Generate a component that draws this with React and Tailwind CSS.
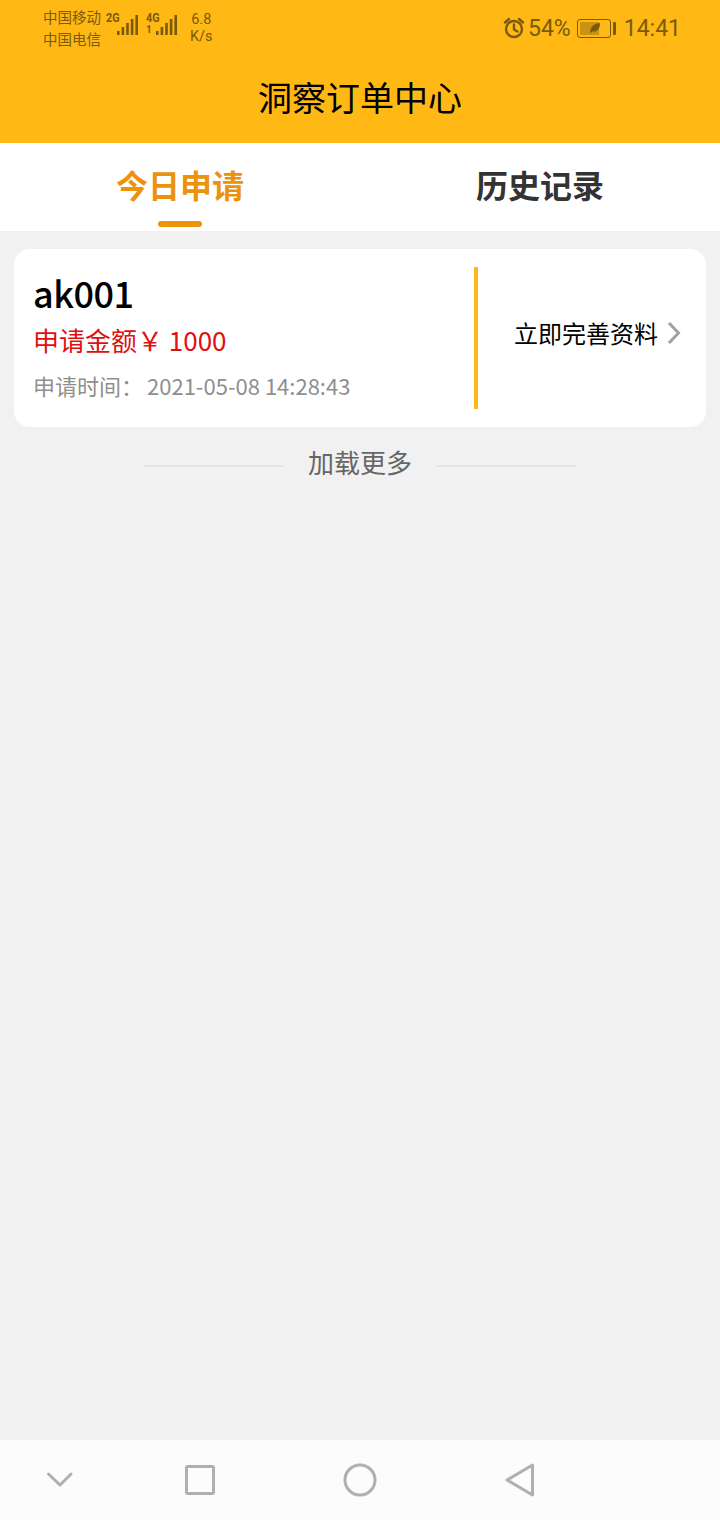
const cjk = { fontFamily: '"Noto Sans CJK SC", "Noto Sans", sans-serif' };

function Signal({ className = "" }) {
  return (
    <svg viewBox="0 0 21 20" className={className} fill="#7a5a0c">
      <rect x="0" y="16" width="2.6" height="4" />
      <rect x="4.6" y="12" width="2.6" height="8" />
      <rect x="9.2" y="8" width="2.6" height="12" />
      <rect x="13.8" y="4" width="2.6" height="16" />
      <rect x="18.4" y="0" width="2.6" height="20" />
    </svg>
  );
}

function StatusBar() {
  return (
    <div className="h-[50px] flex items-center justify-between pl-[43px] pr-[39px] text-[#7a5a0c]">
      <div className="flex items-center">
        <div className="flex flex-col text-[14.5px] leading-[22px] mt-[6px] whitespace-nowrap" style={cjk}>
          <span>中国移动</span>
          <span>中国电信</span>
        </div>
        <div className="relative w-[36px] h-[30px] ml-[4px] mt-[2px]">
          <span className="absolute left-[1px] top-[1px] text-[12px] font-bold leading-[12px] font-['Roboto'] scale-x-90 origin-left">2G</span>
          <Signal className="absolute left-[12px] top-[4px] w-[21px] h-[20px]" />
        </div>
        <div className="relative w-[34px] h-[30px] ml-[4px] mt-[2px]">
          <span className="absolute left-[1px] top-[1px] text-[12px] font-bold leading-[12px] font-['Roboto'] scale-x-90 origin-left">4G</span>
          <span className="absolute left-[1px] top-[13px] text-[10px] font-bold leading-[12px] font-['Roboto']">1</span>
          <Signal className="absolute left-[11px] top-[4px] w-[21px] h-[20px]" />
        </div>
        <div className="flex flex-col items-center text-[14.5px] leading-[17px] ml-[11px] font-['Roboto'] mt-[5px]">
          <span>6.8</span>
          <span>K/s</span>
        </div>
      </div>
      <div className="flex items-center font-['Roboto'] mt-[6px]">
        <svg width="22" height="22" viewBox="0 0 22 22" fill="none" stroke="#7a5a0c" strokeWidth="2.4" strokeLinecap="round" strokeLinejoin="round">
          <circle cx="11" cy="12" r="8" />
          <path d="M11 7.5V12.5L14.5 14.5" />
          <path d="M2 5.5L6 2M20 5.5L16 2" />
        </svg>
        <span className="text-[23px] leading-none ml-[3px]">54%</span>
        <div className="ml-[6px] w-[34px] h-[19px] rounded-[3px] border border-[#7a5a0c] flex items-stretch p-[2px] relative">
          <div className="w-[19px] bg-[#c8930f]" />
          <svg width="12" height="12" viewBox="0 0 12 12" className="absolute left-[11px] top-[2px]" fill="#7a5a0c">
            <path d="M1 11C1 5 5 1.5 11 1C11 7 8 10 3.5 9.5L1 11Z" />
          </svg>
        </div>
        <div className="ml-[2px] w-[3px] h-[13px] bg-[#7a5a0c] rounded-[1px]" />
        <span className="text-[23px] leading-none ml-[8px]">14:41</span>
      </div>
    </div>
  );
}

export default function App() {
  return (
    <div className="w-[720px] h-[1520px] flex flex-col bg-[#f1f1f1] overflow-hidden" style={cjk}>
      <header className="h-[143px] bg-[#ffb814] shrink-0">
        <StatusBar />
        <h1 className="text-[34px] leading-[48px] font-normal text-center text-black mt-[23px]">洞察订单中心</h1>
      </header>

      <nav className="h-[88px] bg-white flex shrink-0">
        <div className="flex-1 relative flex items-center justify-center pb-[6px]">
          <span className="text-[32px] font-bold text-[#ec920c] leading-[44px]">今日申请</span>
          <div className="absolute bottom-[4px] left-[158px] w-[44px] h-[6px] rounded-[3px] bg-[#ec920c]" />
        </div>
        <div className="flex-1 flex items-center justify-center pb-[6px]">
          <span className="text-[32px] font-bold text-[#333333] leading-[44px]">历史记录</span>
        </div>
      </nav>

      <main className="flex-1 px-[14px] pt-[18px]">
        <div className="h-[178px] bg-white rounded-[16px] flex items-center">
          <div className="w-[460px] pl-[19px] flex flex-col">
            <div className="text-[36px] leading-[46px] font-medium text-black -mt-[7px] tracking-[-0.5px]">ak001</div>
            <div className="text-[26px] leading-[34px] text-[#e01010] mt-[8px] whitespace-pre">申请金额￥ 1000</div>
            <div className="text-[22px] leading-[30px] text-[#8f8f8f] mt-[13px] whitespace-pre">申请时间：<span className="ml-[4px]">2021-05-08 14:28:43</span></div>
          </div>
          <div className="w-[4px] h-[142px] bg-[#ffb814]" />
          <div className="flex-1 flex items-center pl-[36px] -mt-[10px]">
            <span className="text-[24px] leading-[32px] text-black">立即完善资料</span>
            <svg width="14" height="24" viewBox="0 0 14 24" fill="none" stroke="#a0a0a0" strokeWidth="3" className="ml-[9px]">
              <path d="M2 2L11.5 12L2 22" />
            </svg>
          </div>
        </div>

        <div className="flex items-center justify-center mt-[17px] h-[36px]">
          <div className="w-[140px] h-[2px] bg-[#e4e4e4] mt-[7px]" />
          <span className="text-[26px] leading-[36px] text-[#666666] mx-[24px]">加载更多</span>
          <div className="w-[140px] h-[2px] bg-[#e4e4e4] mt-[7px]" />
        </div>
      </main>

      <footer className="h-[80px] bg-[#fcfcfc] shrink-0 flex items-center relative">
        <div className="w-[720px] flex items-center">
          <svg width="28" height="18" viewBox="0 0 28 18" fill="none" stroke="#b0b0b0" strokeWidth="3" strokeLinecap="round" strokeLinejoin="round" className="ml-[46px]">
            <path d="M2.5 3L14 14L25 3" />
          </svg>
          <svg width="30" height="30" viewBox="0 0 30 30" fill="none" stroke="#b0b0b0" strokeWidth="3" strokeLinejoin="round" className="ml-[111px]">
            <rect x="1.5" y="1.5" width="27" height="27" rx="1.5" />
          </svg>
          <svg width="34" height="34" viewBox="0 0 34 34" fill="none" stroke="#b0b0b0" strokeWidth="3" className="ml-[128px]">
            <circle cx="17" cy="17" r="15" />
          </svg>
          <svg width="30" height="34" viewBox="0 0 30 34" fill="none" stroke="#b0b0b0" strokeWidth="3" strokeLinejoin="round" className="ml-[128px]">
            <path d="M27.5 2L2 17L27.5 32Z" />
          </svg>
        </div>
      </footer>
    </div>
  );
}
